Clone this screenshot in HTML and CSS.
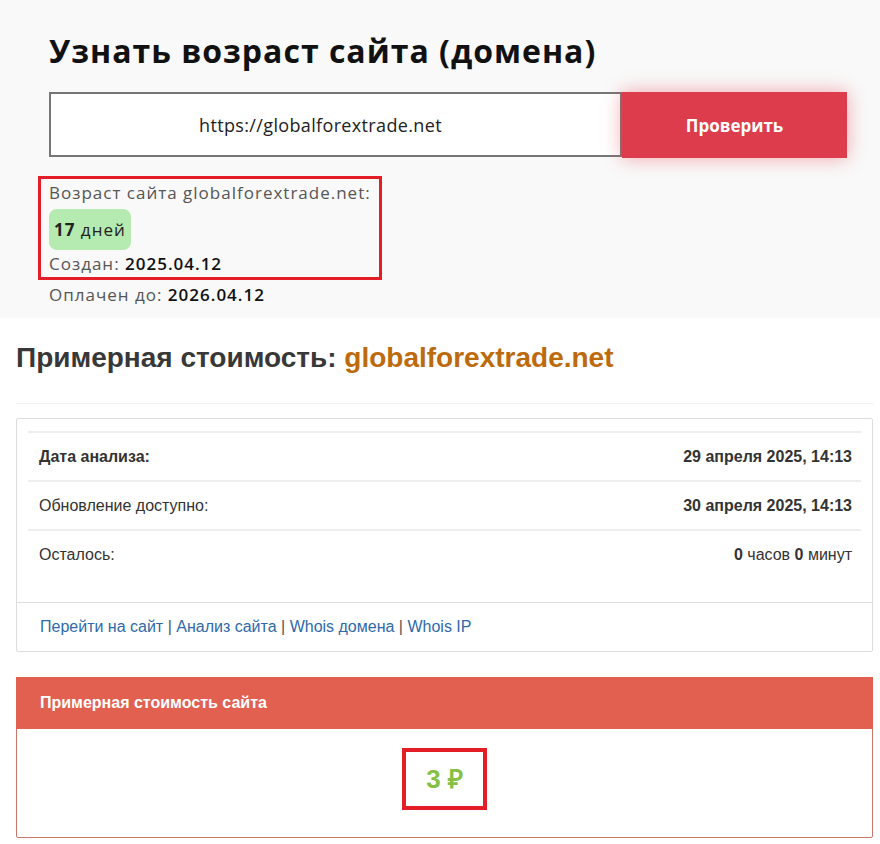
FILE: index.html
```html
<!DOCTYPE html>
<html lang="ru">
<head>
    <meta charset="UTF-8">
    <meta name="viewport" content="width=device-width, initial-scale=1.0">
    <title>Узнать возраст сайта</title>
    <link rel="stylesheet" href="styles.css">
</head>
<body>
    <section class="age-check">
        <h1>Узнать возраст сайта (домена)</h1>
        <form class="check-form">
            <input type="text" name="domain" value="https://globalforextrade.net">
            <button type="submit">Проверить</button>
        </form>
        <div class="age-result">
            <div class="marked">
                <div class="line">Возраст сайта globalforextrade.net:</div>
                <span class="age-badge"><b>17</b> дней</span>
                <div class="line">Создан: <strong>2025.04.12</strong></div>
            </div>
            <div class="line">Оплачен до: <strong>2026.04.12</strong></div>
        </div>
    </section>

    <section class="cost">
        <h2>Примерная стоимость: <span class="domain">globalforextrade.net</span></h2>
        <hr>

        <div class="panel">
            <div class="panel-body">
                <table>
                    <tr>
                        <td><b>Дата анализа:</b></td>
                        <td class="right"><b>29 апреля 2025, 14:13</b></td>
                    </tr>
                    <tr>
                        <td>Обновление доступно:</td>
                        <td class="right"><b>30 апреля 2025, 14:13</b></td>
                    </tr>
                    <tr>
                        <td>Осталось:</td>
                        <td class="right"><b>0</b> часов <b>0</b> минут</td>
                    </tr>
                </table>
            </div>
            <div class="panel-footer">
                <a href="#">Перейти на сайт</a> | <a href="#">Анализ сайта</a> | <a href="#">Whois домена</a> | <a href="#">Whois IP</a>
            </div>
        </div>

        <div class="panel panel-danger">
            <div class="panel-heading">Примерная стоимость сайта</div>
            <div class="panel-body price">
                <span class="price-value">3 ₽</span>
            </div>
        </div>
    </section>
</body>
</html>
```

FILE: styles.css
```css
body {
    margin: 0;
    background-color: #fff;
    font-family: "Liberation Sans", Arial, sans-serif;
}

/* top block */
.age-check {
    background-color: #f9f9f9;
    padding: 31px 33px 10px 49px;
    font-family: "Open Sans", sans-serif;
    color: #222;
}

.age-check h1 {
    margin: 0 0 21px;
    font-size: 32px;
    line-height: 40px;
    font-weight: 700;
    letter-spacing: 1px;
    color: #111;
}

.check-form {
    display: flex;
    height: 66px;
}

.check-form input {
    box-sizing: border-box;
    width: 573px;
    height: 65px;
    border: 2px solid #767676;
    background-color: #fff;
    padding: 0 30px 0 0;
    font-family: inherit;
    font-size: 18px;
    letter-spacing: 0.35px;
    color: #222;
    text-align: center;
}

.check-form button {
    width: 225px;
    border: none;
    background-color: #dd3c4c;
    color: white;
    font-family: inherit;
    font-size: 17px;
    font-weight: 700;
    box-shadow: 0 0 18px rgba(230, 60, 75, 0.45);
}

.age-result {
    margin-top: 18px;
    font-size: 17px;
    letter-spacing: 1px;
    color: #555;
}

.age-result .line {
    line-height: 26px;
}

.age-result strong {
    font-weight: 600;
    color: #111;
}

.marked {
    display: inline-block;
    margin-left: -11px;
    padding: 1px 8px 0;
    border: 3px solid #e31e26;
}

.age-badge {
    display: inline-block;
    margin: 3px 0 1px;
    padding: 7px 5px;
    line-height: 27px;
    border-radius: 8px;
    background-color: #b5eab0;
    color: #222;
}

.age-result .line + .line {
    margin-top: 2px;
}

.marked + .line {
    margin-top: 2px;
}

/* bottom block */
.cost {
    padding: 0 7px 0 16px;
    color: #333;
    font-size: 16px;
}

.cost h2 {
    margin: 0;
    padding-top: 20px;
    font-size: 28px;
    line-height: 40px;
    font-weight: 700;
    color: #383838;
}

.cost h2 .domain {
    color: #bd6a0c;
}

.cost hr {
    margin: 25px 0 14px;
    border: 0;
    border-top: 1px solid #eee;
}

.panel {
    border: 1px solid #ddd;
    border-radius: 2px;
    background-color: #fff;
}

.panel-body {
    padding: 12px 11px;
}

table {
    width: 100%;
    border-collapse: collapse;
    margin-bottom: 12px;
}

td {
    border-top: 2px solid #eee;
    padding: 12px 9px 12px 11px;
    line-height: 23px;
}

td.right {
    text-align: right;
}

.panel-footer {
    border-top: 1px solid #ddd;
    padding: 12px 23px 13px;
    line-height: 23px;
    color: #555;
}

.panel-footer a {
    color: #2f6aa8;
    text-decoration: none;
}

.panel-danger {
    margin-top: 25px;
    border-color: #c9776a;
}

.panel-danger .panel-heading {
    margin: -1px -1px 0;
    padding: 14px 24px 15px;
    line-height: 23px;
    background-color: #e26050;
    color: white;
    font-weight: 700;
}

.price {
    padding: 19px 0 27px;
    text-align: center;
}

.price-value {
    display: inline-block;
    padding: 10px 20px 10px;
    border: 4px solid #e31e26;
    font-size: 26px;
    line-height: 34px;
    font-weight: 700;
    color: #86c043;
}
```
